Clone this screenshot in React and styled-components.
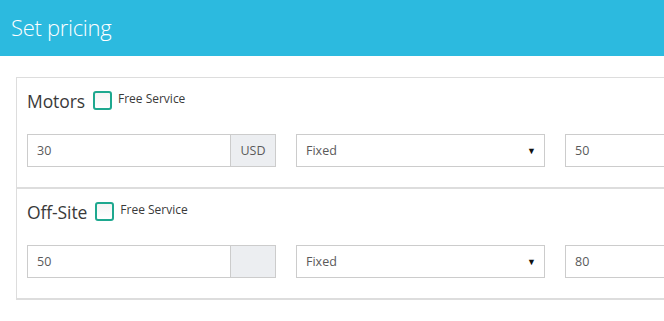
import React from 'react';
import styled, { createGlobalStyle } from 'styled-components';

const GlobalStyle = createGlobalStyle`
  html, body {
    margin: 0;
    padding: 0;
    background: #ffffff;
    overflow: hidden;
  }
  body {
    font-family: 'Open Sans', 'Noto Sans', sans-serif;
    color: #555555;
  }
`;

const Page = styled.div`
  width: 664px;
  height: 321px;
  overflow: hidden;
`;

const TopBar = styled.header`
  height: 56px;
  background: #2cbadf;
  display: flex;
  align-items: center;
  padding-left: 11px;
  box-sizing: border-box;
`;

const Heading = styled.h1`
  margin: 0 0 3px;
  font-weight: 300;
  font-size: 22px;
  color: #ffffff;
  letter-spacing: -0.3px;
`;

const Body = styled.div`
  padding: 21px 0 0 16px;
`;

const Panel = styled.div`
  width: 830px;
  border: 1px solid #dddddd;
  border-bottom: none;
`;

const Section = styled.section`
  padding: 12px 10px 20px;
  border-bottom: 2px solid #dddddd;
`;

const TitleRow = styled.div`
  display: flex;
  align-items: center;
  height: 20px;
  margin-bottom: 24px;
`;

const Title = styled.span`
  font-size: 17.5px;
  color: #3a3a3a;
  margin-right: 8px;
  line-height: 20px;
  padding-top: 2px;
  letter-spacing: -0.1px;
`;

const Check = styled.span`
  width: 15px;
  height: 15px;
  border: 2px solid #1ea88f;
  border-radius: 3px;
  background: linear-gradient(#f4f4f4, #ffffff);
  margin-right: 6px;
`;

const CheckLabel = styled.span`
  font-size: 12px;
  color: #3a3a3a;
  margin-top: -3px;
`;

const Fields = styled.div`
  display: grid;
  grid-template-columns: repeat(3, 249px);
  column-gap: 20px;
`;

const InputGroup = styled.div`
  display: flex;
  height: 33px;
`;

const Field = styled.div`
  flex: 1;
  height: 33px;
  box-sizing: border-box;
  border: 1px solid #cccccc;
  display: flex;
  align-items: center;
  padding: 0 9px;
  font-size: 12.5px;
  color: #5a5a5a;
  background: #ffffff;
`;

const Addon = styled.div`
  width: 45px;
  box-sizing: border-box;
  border: 1px solid #cccccc;
  border-left: none;
  background: #eceef1;
  display: flex;
  align-items: center;
  justify-content: center;
  font-size: 12.5px;
  color: #5a5a5a;
`;

const Select = styled(Field)`
  justify-content: space-between;
  padding-right: 8px;
`;

const Caret = styled.span`
  font-size: 9px;
  color: #111111;
  margin-top: -1px;
`;

const rows = [
  { name: 'Motors', price: '30', unit: 'USD', mode: 'Fixed', extra: '50' },
  { name: 'Off-Site', price: '50', unit: '', mode: 'Fixed', extra: '80' },
];

const App = () => (
  <Page>
    <GlobalStyle />
    <TopBar>
      <Heading>Set pricing</Heading>
    </TopBar>
    <Body>
      <Panel>
        {rows.map((row) => (
          <Section key={row.name}>
            <TitleRow>
              <Title>{row.name}</Title>
              <Check />
              <CheckLabel>Free Service</CheckLabel>
            </TitleRow>
            <Fields>
              <InputGroup>
                <Field>{row.price}</Field>
                <Addon>{row.unit}</Addon>
              </InputGroup>
              <Select>
                <span>{row.mode}</span>
                <Caret>▼</Caret>
              </Select>
              <Field>{row.extra}</Field>
            </Fields>
          </Section>
        ))}
      </Panel>
    </Body>
  </Page>
);

export default App;
